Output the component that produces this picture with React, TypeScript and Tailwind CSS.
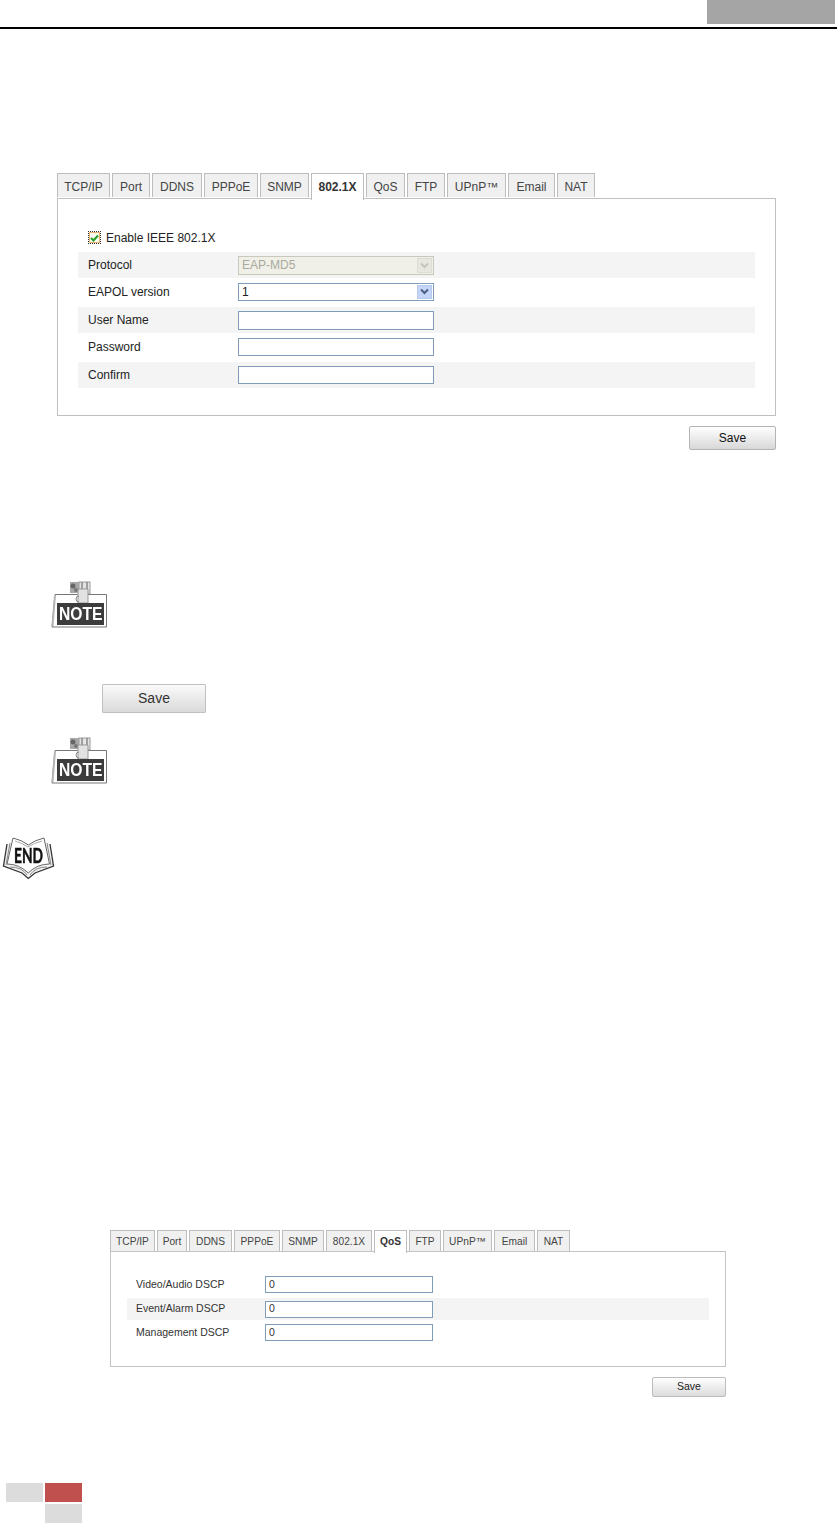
import React from "react";

const F = "font-['Liberation_Sans',Arial,sans-serif]";

function Tab({ w, label, active, big }: { w: number; label: string; active?: boolean; big?: boolean }) {
  const size = big
    ? active
      ? "h-[27px] text-[12px] pt-[4px]"
      : "h-[24px] text-[12px] pt-[4px]"
    : active
      ? "h-[23px] text-[10.2px] pt-[3px]"
      : "h-[21px] text-[10.2px] pt-[3px]";
  return (
    <div
      style={{ width: w }}
      className={`flex items-start justify-center border border-b-0 border-[#bdbdbd] ${size} ${
        active ? "bg-white font-bold text-[#333] relative z-10" : "bg-[#f0f0f0] text-[#444]"
      }`}
    >
      {label}
    </div>
  );
}

function Chevron({ color }: { color: string }) {
  return (
    <svg width="9" height="7" viewBox="0 0 9 7">
      <path d="M1 1.500 L4.500 5 L8 1.500" fill="none" stroke={color} strokeWidth="2" />
    </svg>
  );
}

function NoteIcon() {
  return (
    <svg width="58" height="48" viewBox="0 0 58 48" className="block blur-[0.4px]">
      <rect x="20" y="1" width="9" height="11" fill="#a8a8a8" />
      <circle cx="23" cy="5" r="2.500" fill="#666" />
      <circle cx="26" cy="9" r="2" fill="#777" />
      <rect x="29" y="1" width="11" height="12" fill="#e4e4e4" stroke="#9a9a9a" strokeWidth="1" />
      <path d="M32 1v11M37 1v11" stroke="#888" strokeWidth="1.500" />
      <path d="M5 13.500H56.500V46H2Z" fill="#fff" stroke="#777" strokeWidth="1" />
      <path d="M5 14L2.500 45" stroke="#b5b5b5" strokeWidth="2" />
      <path d="M28 8h10v14H28z" fill="#e2e2e2" stroke="#999" strokeWidth="1" />
      <path d="M29 15a3 3 0 1 0 0 6" fill="none" stroke="#888" strokeWidth="1" />
      <rect x="7" y="22" width="47" height="22" fill="#3c3c3c" />
      <text x="30.800" y="39" textAnchor="middle" fontFamily="'Liberation Sans',Arial,sans-serif" fontWeight="700" fontSize="17.500" fill="#fff" textLength="43.500" lengthAdjust="spacingAndGlyphs">NOTE</text>
    </svg>
  );
}

function EndIcon() {
  return (
    <svg width="53" height="44" viewBox="0 0 53 44" className="block blur-[0.3px]">
      <path d="M5 7 L1.500 29 L20 36 L26.300 41.500 L33 36 L51.500 29 L48 7" fill="#f2f2f2" stroke="#333" strokeWidth="1.300" />
      <path d="M11 1 Q20 3 26.300 8 Q33 3 42 1 L47.500 27 Q35 27 26.300 36 Q17 27 5 27 Z" fill="#fff" stroke="#666" strokeWidth="1" />
      <path d="M8 6 L4 28 M45 6 L49 28 M8 30 Q20 30 25 38 M45 30 Q33 30 28 38" fill="none" stroke="#888" strokeWidth="1" />
      <path d="M13 4 Q20 6 26 10 Q32 6 40 4" fill="none" stroke="#aaa" strokeWidth="1" />
      <text x="26.500" y="25.500" textAnchor="middle" fontFamily="Lato,'Liberation Sans',sans-serif" fontWeight="700" fontSize="20" fill="#111" stroke="#111" strokeWidth="0.500" textLength="29" lengthAdjust="spacingAndGlyphs">END</text>
    </svg>
  );
}

const row1 = "flex items-center pl-[10px] text-[12px] text-[#222]";

export default function App() {
  const tabs1: [number, string][] = [[53, "TCP/IP"], [38, "Port"], [50, "DDNS"], [54, "PPPoE"], [49, "SNMP"], [53, "802.1X"], [39, "QoS"], [38, "FTP"], [59, "UPnP™"], [47, "Email"], [38, "NAT"]];
  const tabs2: [number, string][] = [[45, "TCP/IP"], [30, "Port"], [43, "DDNS"], [46, "PPPoE"], [42, "SNMP"], [46, "802.1X"], [33, "QoS"], [32, "FTP"], [49, "UPnP™"], [41, "Email"], [33, "NAT"]];
  return (
    <div className={`${F} w-[837px] h-[1525px] bg-white overflow-hidden`}>
      <div className="flex justify-end pr-[2px]">
        <div className="w-[128px] h-[24px] bg-[#a5a5a5]" />
      </div>
      <div className="mt-[3px] h-[2px] bg-black" />

      {/* 802.1X panel */}
      <div className="ml-[57px] mt-[144px] w-[719px]">
        <div className="flex gap-[2px] h-[25px] items-start">
          {tabs1.map(([w, l]) => <Tab key={l} w={w} label={l} big active={l === "802.1X"} />)}
        </div>
        <div className="border border-[#c0c0c0] h-[218px] pl-[20px] pr-[20px] pt-[32px]">
          <div className="flex items-start h-[21px] pl-[10px] text-[12px] leading-[14px] text-[#222]">
            <span className="w-[13px] h-[13px] border border-dotted border-[#333] flex items-center justify-center mr-[5px] shrink-0">
              <span className="w-[11px] h-[11px] border border-[#e6b46e] bg-[#fbfbf2] flex items-center justify-center">
                <svg width="9" height="8" viewBox="0 0 9 8"><path d="M1 4 L3.500 6.500 L8 1.500" fill="none" stroke="#21a121" strokeWidth="2" /></svg>
              </span>
            </span>
            Enable IEEE 802.1X
          </div>
          <div className={`${row1} h-[26px] bg-[#f4f4f4]`}>
            <span className="w-[150px]">Protocol</span>
            <div className="w-[196px] h-[19px] border border-[#c8c8bc] bg-[#f1f0e8] flex items-center justify-between pl-[3px] pr-[1px] text-[#a9a99f]">
              EAP-MD5
              <span className="w-[15px] h-[15px] bg-[#e8e7df] border border-[#dcdcd4] flex items-center justify-center"><Chevron color="#c4c4bc" /></span>
            </div>
          </div>
          <div className={`${row1} h-[29px] pb-[2px]`}>
            <span className="w-[150px]">EAPOL version</span>
            <div className="w-[196px] h-[18px] border border-[#7f9db9] bg-white flex items-center justify-between pl-[3px] pr-[1px]">
              1
              <span className="w-[15px] h-[14px] bg-[#c5d5f7] border border-[#b4c8f0] flex items-center justify-center"><Chevron color="#4d6185" /></span>
            </div>
          </div>
          <div className={`${row1} h-[26px] bg-[#f4f4f4]`}>
            <span className="w-[150px]">User Name</span>
            <div className="w-[196px] h-[19px] border border-[#7f9db9] bg-white" />
          </div>
          <div className={`${row1} h-[29px] pb-[2px]`}>
            <span className="w-[150px]">Password</span>
            <div className="w-[196px] h-[18px] border border-[#7f9db9] bg-white" />
          </div>
          <div className={`${row1} h-[26px] bg-[#f4f4f4]`}>
            <span className="w-[150px]">Confirm</span>
            <div className="w-[196px] h-[18px] border border-[#7f9db9] bg-white" />
          </div>
        </div>
        <div className="flex justify-end mt-[10px]">
          <div className="w-[87px] h-[24px] border border-[#b4b4b4] rounded-[2px] bg-gradient-to-b from-white to-[#d8d8d8] flex items-center justify-center text-[12px] text-[#111]">Save</div>
        </div>
      </div>

      {/* Note */}
      <div className="ml-[50px] mt-[131px]"><NoteIcon /></div>
      <div className="ml-[102px] mt-[55px] w-[104px] h-[29px] border border-[#c0c0c0] rounded-[1px] bg-gradient-to-b from-[#fafafa] to-[#dadada] flex items-center justify-center text-[14px] text-[#333]">Save</div>
      <div className="ml-[50px] mt-[24px]"><NoteIcon /></div>
      <div className="ml-[2px] mt-[52px]"><EndIcon /></div>

      {/* QoS panel */}
      <div className="ml-[110px] mt-[349px] w-[616px]">
        <div className="flex gap-[2px] h-[21px] items-start">
          {tabs2.map(([w, l]) => <Tab key={l} w={w} label={l} active={l === "QoS"} />)}
        </div>
        <div className="border border-[#c4c4c4] h-[116px] pl-[16px] pr-[16px] pt-[21px] text-[10.500px] text-[#333]">
          <div className="flex items-center h-[25px] pl-[9px] pb-[2px]">
            <span className="w-[129px]">Video/Audio DSCP</span>
            <div className="w-[168px] h-[17px] border border-[#7f9db9] bg-white flex items-center pl-[3px]">0</div>
          </div>
          <div className="flex items-center h-[22px] pl-[9px] bg-[#f4f4f4]">
            <span className="w-[129px]">Event/Alarm DSCP</span>
            <div className="w-[168px] h-[17px] border border-[#7f9db9] bg-white flex items-center pl-[3px]">0</div>
          </div>
          <div className="flex items-center h-[25px] pl-[9px]">
            <span className="w-[129px]">Management DSCP</span>
            <div className="w-[168px] h-[17px] border border-[#7f9db9] bg-white flex items-center pl-[3px]">0</div>
          </div>
        </div>
        <div className="flex justify-end mt-[10px]">
          <div className="w-[74px] h-[20px] border border-[#bcbcbc] rounded-[2px] bg-gradient-to-b from-white to-[#dcdcdc] flex items-center justify-center text-[10.500px] text-[#222]">Save</div>
        </div>
      </div>

      {/* Footer blocks */}
      <div className="ml-[6px] mt-[86px] grid grid-cols-[37px_37px] gap-x-[2px] gap-y-[2px]">
        <div className="h-[19px] bg-[#dcdcdc]" />
        <div className="h-[19px] bg-[#c0504d]" />
        <div className="h-[19px]" />
        <div className="h-[19px] bg-[#dcdcdc]" />
      </div>
    </div>
  );
}
